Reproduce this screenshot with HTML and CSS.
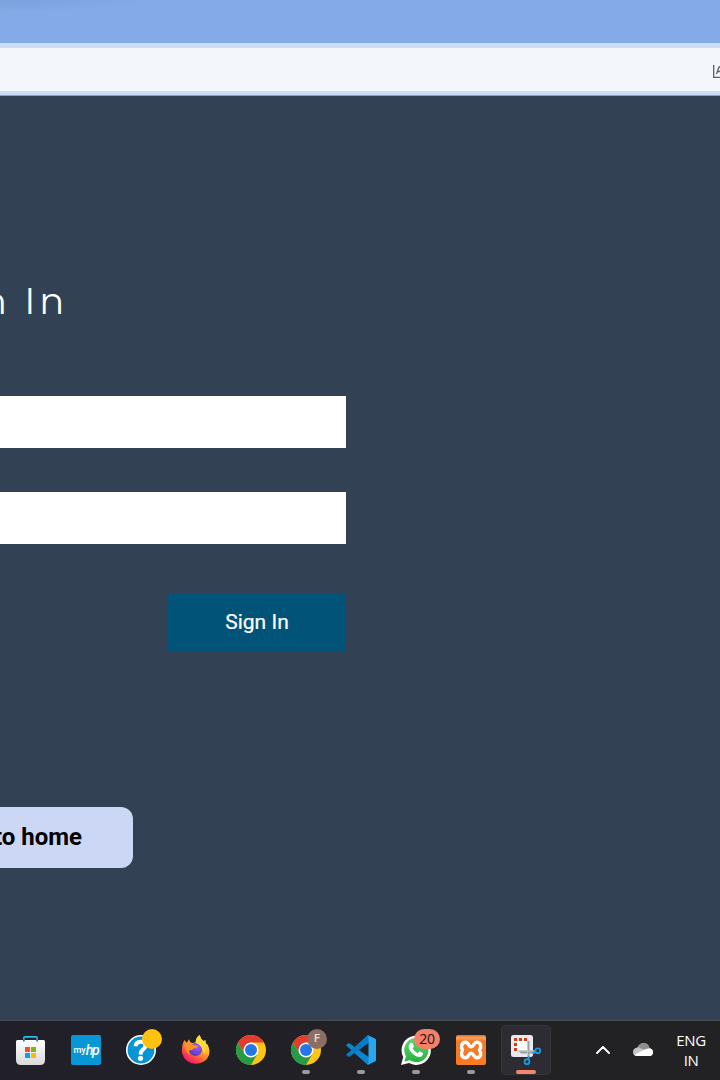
FILE: index.html
```html
<!DOCTYPE html>
<html lang="en">
<head>
<meta charset="utf-8">
<title>Sign In</title>
<link rel="stylesheet" href="styles.css">
</head>
<body>
<div class="screen">
  <header class="tabstrip"></header>
  <div class="toolbar">
    <div class="address">
      <svg class="translate" width="14" height="14" viewBox="0 0 14 14" fill="none" stroke="#5c6166" stroke-width="1.3"><path d="M.7 0V12.400H14"/><path d="M3.500 9L6 2H8L11 9M4.500 6.500H10"/></svg>
    </div>
  </div>
  <main class="page">
    <h1 class="title">Sign In</h1>
    <form class="form">
      <input class="field" type="text" aria-label="Username">
      <input class="field" type="password" aria-label="Password">
      <button class="submit" type="button">Sign In</button>
    </form>
    <a class="home">Back to home</a>
  </main>
  <footer class="taskbar">
    <div class="apps">
      <div class="app">
        <svg class="icon" viewBox="0 0 30 30"><defs><linearGradient id="bag" x2="0" y2="1"><stop stop-color="#fff"/><stop offset="1" stop-color="#d9d9db"/></linearGradient><linearGradient id="handle" x2="0" y2="1"><stop stop-color="#35c4f4"/><stop offset="1" stop-color="#087cc0"/></linearGradient></defs><path d="M7 7V3Q7 1 9 1H20Q22 1 22 3V7H20.300V2.700H8.700V7Z" fill="url(#handle)"/><path d="M0 6.500Q0 5 1.500 5H27.500Q29 5 29 6.500V25Q29 30 24 30H5Q0 30 0 25Z" fill="url(#bag)"/><path d="M7 5h1.700v1.500H7zM20.300 5H22v1.500h-1.700z" fill="#087cc0"/><path d="M9 12h5v5H9z" fill="#f25022"/><path d="M15 12h5v5h-5z" fill="#7fba00"/><path d="M9 18h5v5H9z" fill="#00a4ef"/><path d="M15 18h5v5h-5z" fill="#ffb900"/></svg>
      </div>
      <div class="app">
        <div class="icon myhp"><span class="my">my</span><span class="hp">hp</span></div>
      </div>
      <div class="app">
        <svg class="icon" viewBox="0 0 30 30"><circle cx="15" cy="15" r="14.200" fill="#0794d5" stroke="#fff" stroke-width="1.600"/><path d="M9.500 11.300C10 8 12.500 6.600 15.500 6.800C19.700 7.200 20.500 10.800 18.300 13.300C16.400 15.200 14.800 15.600 14.500 19.500" fill="none" stroke="#fff" stroke-width="4"/><circle cx="14.500" cy="23.300" r="2.600" fill="#fff"/><circle cx="26" cy="4" r="10" fill="#ffc20e"/></svg>
      </div>
      <div class="app">
        <svg class="icon" viewBox="0 0 30 30"><defs><linearGradient id="flame" x1=".85" y1=".1" x2=".25" y2=".95"><stop stop-color="#fff34f"/><stop offset=".35" stop-color="#ffb52a"/><stop offset=".65" stop-color="#ff6a33"/><stop offset="1" stop-color="#f5156c"/></linearGradient><radialGradient id="globe" cx=".65" cy=".3" r=".8"><stop stop-color="#a35cff"/><stop offset="1" stop-color="#4e35b5"/></radialGradient></defs><path d="M3.500 5L5.800 8L8 4.200Q8.500 7 11 8L14.500 7.500Q14.500 2.600 18.600 0Q19.500 4 22.500 6L24.500 5L25 8.500L26.500 9.500Q29.500 15 28 20Q25 28.500 15 28.700Q4 28.500 1.200 18.500Q0 10.500 3.500 5Z" fill="url(#flame)"/><circle cx="14.500" cy="14.500" r="6.500" fill="url(#globe)"/><path d="M3.500 8Q8 6.500 11 9Q13.500 11 17 10.500Q16.500 13 12.500 13.500Q11 16 8.500 15Q7 18 10 20Q3 18 3.500 8Z" fill="#ff9128"/><path d="M14.700 7.800Q15 2.500 18.600 0Q19.500 4 22.500 6Q27 13 23 19Q21 10 14.700 7.800Z" fill="#ffda3c"/></svg>
      </div>
      <div class="app">
        <svg class="icon" viewBox="0 0 30 30"><defs><g id="chrome"><circle cx="15" cy="15" r="15" fill="#ffc414"/><path d="M2 7.500A15 15 0 0 1 28 7.500H15L8.500 18.700Z" fill="#e33b2e"/><path d="M2 7.500A15 15 0 0 0 15 30L21.500 18.700H8.500Z" fill="#249b47"/><circle cx="15" cy="15" r="7.500" fill="#fff"/><circle cx="15" cy="15" r="6" fill="#2576e8"/></g></defs><use href="#chrome"/></svg>
      </div>
      <div class="app running">
        <svg class="icon" viewBox="0 0 30 30"><use href="#chrome"/></svg>
        <span class="profile">F</span>
      </div>
      <div class="app running">
        <svg class="icon" viewBox="0 0 30 30"><path d="M0 10.300L2.300 8.300Q3 8 3.700 8.500L24 23V29L21.500 29.800Z" fill="#0b86d1"/><path d="M0 19.700L2.300 21.700Q3 22 3.700 21.500L24 7V1L21.500.2Z" fill="#087cc5"/><path d="M21.300 0L29 3.400Q30 4 30 5V25Q30 26 29 26.600L21.300 30Q22.500 29 22.500 27.500V2.500Q22.500 1 21.300 0Z" fill="#28a6ef"/></svg>
      </div>
      <div class="app running">
        <svg class="icon" viewBox="0 0 30 30"><defs><linearGradient id="wa" x2="0" y2="1"><stop stop-color="#62d66f"/><stop offset="1" stop-color="#25b43f"/></linearGradient></defs><path d="M0 30L2.200 22A14.700 14.700 0 1 1 8 28Z" fill="#fff"/><path d="M3.500 26.500L5 21.300A12.200 12.200 0 1 1 8.800 25.200Z" fill="url(#wa)"/><path d="M9 8.300Q10 7.200 11.400 8L12.900 11.300Q12.900 12.300 11.500 13.500Q13.500 16.800 16.700 18.300L18.500 16.300L22 18Q22.200 21 19 22Q16 22.500 11.300 18.500Q5.500 13 9 8.300Z" fill="#fff"/></svg>
        <span class="count">20</span>
      </div>
      <div class="app running">
        <svg class="icon" viewBox="0 0 30 30"><defs><linearGradient id="orange" x2="0" y2="1"><stop stop-color="#e96c1f"/><stop offset=".1" stop-color="#fba466"/><stop offset=".2" stop-color="#f17a27"/><stop offset="1" stop-color="#fb7a21"/></linearGradient></defs><rect width="30" height="30" rx="2" fill="url(#orange)"/><path d="M6.500 15C4.500 12 5.500 7.300 9.500 7.300C13 7.300 12 11.700 15 11.700S17.500 7.300 20.700 7.300C25 7.300 25.700 12 23.500 15C25.700 18 25 22.700 20.700 22.700C17.500 22.700 18 18.300 15 18.300S13 22.700 9.500 22.700C5.500 22.700 4.500 18 6.500 15Z" fill="none" stroke="#fff" stroke-width="3.400" stroke-linejoin="round"/></svg>
      </div>
      <div class="app active">
        <svg class="icon" viewBox="0 0 30 30"><rect width="22" height="22" rx="2.500" fill="#e8eaed"/><path d="M6 6H16V16H6Z" fill="#fff"/><path d="M3 3h3v3H3zM8 3h3v3H8zM13 3h3v3h-3zM3 8h3v3H3zM3 13h3v3H3z" fill="#d83b14"/><path d="M16 6H18.500V22L17 24ZM7 15.500H25L24 18.500H10Z" fill="#9ba0a5"/><path d="M16 6H17V22H16ZM7 15.500H24V16.500H8Z" fill="#c7c9cb"/><g fill="none" stroke="#159bdc" stroke-width="1.900"><circle cx="26.800" cy="15.800" r="2.400"/><circle cx="16" cy="26.700" r="2.400"/><path d="M24.500 17L21.500 18.500M17 24.500L18.500 21.500"/></g></svg>
      </div>
    </div>
    <div class="tray">
      <svg class="chevron" viewBox="0 0 14 8" fill="none" stroke="#fff" stroke-width="1.900" stroke-linecap="round" stroke-linejoin="round"><path d="M1 7L7 1L13 7"/></svg>
      <svg class="cloud" viewBox="0 0 20 13"><path d="M4.500 4.500Q7 0 10.500 0Q15 0 16.500 5Q20 6 20 9T17 13H4Q0 13 0 9T4.500 4.500Z" fill="#c4c4c4"/><path d="M4.500 3.800Q7 0 10.500 0Q15 0 16.500 5L11.500 7Z" fill="#8e8e8e"/><path d="M1.500 11.800L11.500 6.500Q19.500 3.500 20 9Q20 13 16.500 13H4Q2.500 13 1.500 11.800Z" fill="#fff"/></svg>
      <div class="lang"><span>ENG</span><span>IN</span></div>
    </div>
  </footer>
</div>
</body>
</html>
```
FILE: styles.css
```css
* { box-sizing: border-box; }
body { margin: 0; font-family: Roboto, sans-serif; }
.screen { width: 720px; height: 1080px; display: flex; flex-direction: column; overflow: hidden; background: #334154; }
.tabstrip { height: 43px; flex: none; background: radial-gradient(ellipse 150px 12px at 0 0, #7ca3dd 20%, transparent), #84abe8; }
.toolbar { height: 53px; flex: none; padding: 5px 0 4px; background: #cbdcf6; border-bottom: 1px solid #91a0b9; }
.address { height: 43px; background: #f3f7fc; display: flex; align-items: center; padding: 5px 0 0 713px; overflow: hidden; }
.translate { flex: none; }
.page { height: 924px; flex: none; display: flex; flex-direction: column; align-items: flex-start; }
.title { width: 68px; height: 56px; margin: 177px 0 0; display: flex; justify-content: flex-end; white-space: nowrap; font: 400 37px/56px Montserrat, Lato, sans-serif; letter-spacing: 3.800px; color: #fff; }
.form { width: 346px; margin-top: 67px; display: flex; flex-direction: column; align-items: flex-end; }
.field { width: 346px; height: 52px; margin: 0 0 44px; padding: 0 16px; border: 0; border-radius: 0; background: #fff; }
.submit { width: 178px; height: 58px; margin-top: 6px; padding: 0 0 2px; border: 0; background: #015478; color: #fff; font: 400 21px Roboto, sans-serif; -webkit-text-stroke: .2px #fff; }
.home { width: 233px; height: 61px; margin: 155px 0 0 -100px; padding: 0 51px 2px 0; display: flex; align-items: center; justify-content: flex-end; border-radius: 12px; background: #ccd7f5; color: #000; font-weight: 700; font-size: 24px; white-space: nowrap; }
.taskbar { height: 60px; flex: none; display: flex; align-items: flex-start; padding: 4px 0 0 6px; border-top: 1px solid #484b50; background: linear-gradient(90deg, #211f29, #222125 55%, #222224); }
.apps { display: flex; gap: 5px; }
.app { position: relative; width: 50px; height: 50px; padding: 10px; border-radius: 5px; }
.icon { display: block; width: 30px; height: 30px; overflow: visible; }
.myhp { display: flex; align-items: center; justify-content: center; border-radius: 2px; background: #0796d6; color: #fff; line-height: 1; }
.my { font: 500 9px Roboto, sans-serif; }
.hp { font: italic 500 14px Roboto, sans-serif; letter-spacing: -1.200px; }
.running::after, .active::after { content: ""; position: absolute; left: 21px; top: 45px; width: 8px; height: 4px; border-radius: 2px; background: #9b9b9d; }
.active { background: #2d2c32; box-shadow: inset 0 0 0 1px #36353b; }
.active::after { left: 15px; width: 20px; background: #f4866c; }
.profile, .count { position: absolute; top: 4px; height: 20px; border-radius: 10px; text-align: center; line-height: 20px; }
.profile { left: 26px; width: 20px; background: #8d6e63; color: #e9ded9; font-size: 11px; font-weight: 500; }
.count { left: 23px; width: 26px; background: #f4806a; color: #151515; font-family: "Open Sans", sans-serif; font-size: 14px; letter-spacing: -.3px; }
.tray { display: flex; color: #fff; }
.chevron { width: 14px; height: 8px; margin: 21px 0 0 45px; }
.cloud { width: 20px; height: 13px; margin: 18px 0 0 23px; }
.lang { width: 32px; margin: 5px 0 0 22px; display: flex; flex-direction: column; align-items: center; font: 15px/20px "Open Sans", sans-serif; letter-spacing: -.4px; }
```
